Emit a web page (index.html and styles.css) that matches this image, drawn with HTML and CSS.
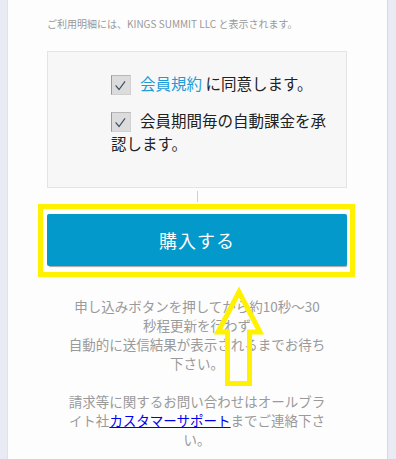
FILE: index.html
```html
<!DOCTYPE html>
<html lang="ja">
<head>
<meta charset="utf-8">
<link rel="stylesheet" href="styles.css">
</head>
<body>
<div class="page">
  <div class="side side-left"></div>
  <main class="panel">
    <p class="note">ご利用明細には、KINGS SUMMIT LLC と表示されます。</p>
    <div class="agree">
      <div class="row"><span class="cb"><svg viewBox="0 0 20 20" width="18" height="18"><path d="M4 10.5 L7.8 15 L14.5 6" fill="none" stroke="#3c4d63" stroke-width="1.3"/></svg></span><a class="terms">会員規約</a> に同意します。</div>
      <div class="row row-2"><span class="cb"><svg viewBox="0 0 20 20" width="18" height="18"><path d="M4 10.5 L7.8 15 L14.5 6" fill="none" stroke="#3c4d63" stroke-width="1.3"/></svg></span>会員期間毎の自動課金を承認します。</div>
    </div>
    <div class="tick"></div>
    <div class="highlight"><button class="buy">購入する</button></div>
    <p class="info">申し込みボタンを押してから約10秒～30秒程更新を行わず<br>自動的に送信結果が表示されるまでお待ち下さい。<br><br>請求等に関するお問い合わせはオールブライト社<a class="support">カスタマーサポート</a>までご連絡下さい。</p>
  </main>
  <div class="side side-right"></div>
  <svg class="arrow" width="60" height="110" viewBox="0 0 60 110">
    <polygon points="29,10 50,50 39.5,50 39.5,101.5 17.5,101.5 17.5,50 8,50" fill="none" stroke="#fff100" stroke-width="5" stroke-linejoin="miter"/>
  </svg>
</div>
</body>
</html>
```
FILE: styles.css
```css
html, body {
  margin: 0;
  padding: 0;
  background: #fdfdfd;
}
.page {
  position: relative;
  display: flex;
  width: 396px;
  height: 459px;
  overflow: hidden;
  font-family: "Noto Sans CJK JP", "Noto Sans", sans-serif;
}
.side {
  background: #e8ebf4;
  flex: none;
}
.side-left {
  width: 7px;
  border-right: 1px solid #dfe2ea;
}
.side-right {
  width: 8px;
  border-left: 1px solid #d6d9e2;
}
.panel {
  flex: 1;
  padding: 16px 40px 0 39px;
  background: #fdfdfd;
}
.note {
  margin: 0 0 19px;
  font-size: 10px;
  line-height: 16px;
  color: #999;
  white-space: nowrap;
}
.agree {
  border: 1px solid #e4e4e4;
  background: #f7f7f7;
  padding: 20px 12px 32px 63px;
  font-size: 15.5px;
  line-height: 23px;
  color: #222;
}
.row-2 {
  margin-top: 14px;
}
.cb {
  display: inline-flex;
  align-items: center;
  justify-content: center;
  box-sizing: border-box;
  width: 20px;
  height: 20px;
  margin-right: 9px;
  vertical-align: -4px;
  background: #dcdcdc;
  border: 1px solid #d0d0d0;
  border-left-color: #9a9a9a;
  border-top-color: #b8b8b8;
}
.terms {
  color: #1e9bd7;
}
.tick {
  width: 1px;
  height: 11px;
  margin: 3px auto 0;
  background: #cfcfcf;
}
.highlight {
  margin: 2px -8px 0 -9px;
  border: 5px solid #fff100;
  padding: 5px 3px 6px 4px;
  background: #fff;
}
.buy {
  display: block;
  width: 100%;
  height: 52px;
  border: none;
  border-radius: 2px;
  background: #0399ca;
  color: #fff;
  font-family: "Noto Sans CJK JP", "Noto Sans", sans-serif;
  font-size: 18px;
  letter-spacing: 1px;
  box-shadow: 1px 2px 1px -1px rgba(0, 0, 0, 0.35);
}
.info {
  width: 258px;
  margin: 20px auto 0;
  font-size: 13.5px;
  line-height: 19px;
  color: #9a9a9a;
  text-align: center;
}
.support {
  display: inline-block;
  line-height: 19px;
  height: 19px;
  color: #0000ee;
  text-decoration: underline;
}
.arrow {
  position: absolute;
  left: 210px;
  top: 282px;
}
```
